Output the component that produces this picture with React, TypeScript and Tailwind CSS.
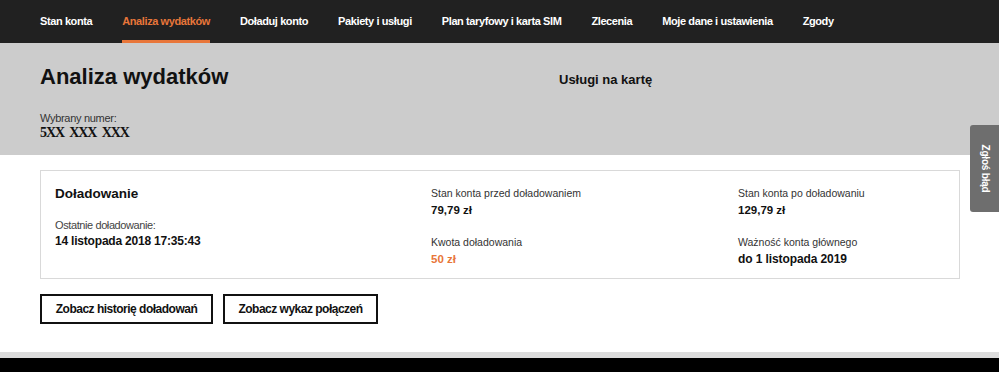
import React from "react";

const navItems = [
  "Stan konta",
  "Analiza wydatków",
  "Doładuj konto",
  "Pakiety i usługi",
  "Plan taryfowy i karta SIM",
  "Zlecenia",
  "Moje dane i ustawienia",
  "Zgody",
];

export default function App() {
  return (
    <div
      className="relative w-[999px] h-[372px] overflow-hidden bg-white"
      style={{ fontFamily: '"Liberation Sans", Arial, sans-serif' }}
    >
      <nav className="h-[43px] bg-[#212121] flex items-stretch pl-[40px] gap-[30px]">
        {navItems.map((item, i) => (
          <div
            key={item}
            className={
              "flex items-center text-[11px] tracking-[-0.4px] font-bold relative pb-[1px] " +
              (i === 1 ? "text-[#e8763a]" : "text-white")
            }
          >
            {item}
            {i === 1 && (
              <span className="absolute left-0 right-0 bottom-0 h-[3px] bg-[#e8763a]" />
            )}
          </div>
        ))}
      </nav>

      <header className="h-[112px] bg-[#cccccc] px-[40px] pt-[20px]">
        <div className="flex items-end">
          <h1 className="w-[519px] text-[22px] leading-[28px] font-bold text-[#111]">
            Analiza wydatków
          </h1>
          <div className="text-[13px] font-bold text-[#111] pb-[2px]">Usługi na kartę</div>
        </div>
        <div className="mt-[21px] text-[11px] tracking-[-0.3px] leading-[13px] text-[#333]">
          Wybrany numer:
        </div>
        <div
          className="text-[14px] tracking-[-1.1px] [word-spacing:3px] leading-[16px] font-bold text-[#111]"
          style={{ fontFamily: '"Liberation Serif", "Times New Roman", serif' }}
        >
          5XX XXX XXX
        </div>
      </header>

      <main className="h-[197px] px-[40px] pt-[15px]">
        <section className="w-[920px] h-[109px] border border-[#d9d9d9] flex pl-[14px] pt-[14px]">
          <div className="w-[376px]">
            <div className="text-[13.5px] leading-[18px] font-bold text-[#111]">Doładowanie</div>
            <div className="mt-[15px] text-[11px] tracking-[-0.4px] leading-[14px] text-[#444]">
              Ostatnie doładowanie:
            </div>
            <div className="mt-[2px] text-[12px] tracking-[-0.2px] leading-[14px] font-bold text-[#111]">
              14 listopada 2018 17:35:43
            </div>
          </div>
          <div className="w-[307px] pt-[1px]">
            <div className="text-[10.5px] leading-[14px] text-[#333]">Stan konta przed doładowaniem</div>
            <div className="mt-[3px] text-[11.5px] leading-[14px] font-bold text-[#111]">79,79 zł</div>
            <div className="mt-[18px] text-[10.5px] leading-[14px] text-[#333]">Kwota doładowania</div>
            <div className="mt-[3px] text-[11.5px] leading-[14px] font-bold text-[#e8763a]">50 zł</div>
          </div>
          <div className="pt-[1px]">
            <div className="text-[10.5px] leading-[14px] text-[#333]">Stan konta po doładowaniu</div>
            <div className="mt-[3px] text-[11.5px] leading-[14px] font-bold text-[#111]">129,79 zł</div>
            <div className="mt-[18px] text-[10.5px] leading-[14px] text-[#333]">Ważność konta głównego</div>
            <div className="mt-[3px] text-[12px] tracking-[-0.1px] leading-[14px] font-bold text-[#111]">
              do 1 listopada 2019
            </div>
          </div>
        </section>
        <div className="mt-[15px] flex gap-[10px]">
          <button className="w-[173px] h-[30px] border-2 border-[#111] text-[12px] tracking-[-0.5px] font-bold text-[#111] bg-white">
            Zobacz historię doładowań
          </button>
          <button className="w-[155px] h-[30px] border-2 border-[#111] text-[12px] tracking-[-0.5px] font-bold text-[#111] bg-white">
            Zobacz wykaz połączeń
          </button>
        </div>
      </main>

      <div className="h-[6px] bg-[#dcdcdc]" />
      <div className="h-[14px] bg-black" />

      <div className="absolute right-0 top-[125px] w-[29px] h-[87px] bg-[#6e6e6e] rounded-l-[3px] flex items-center justify-center">
        <span className="rotate-90 whitespace-nowrap text-white text-[10px] tracking-[-0.2px] font-bold">
          Zgłoś błąd
        </span>
      </div>
    </div>
  );
}
